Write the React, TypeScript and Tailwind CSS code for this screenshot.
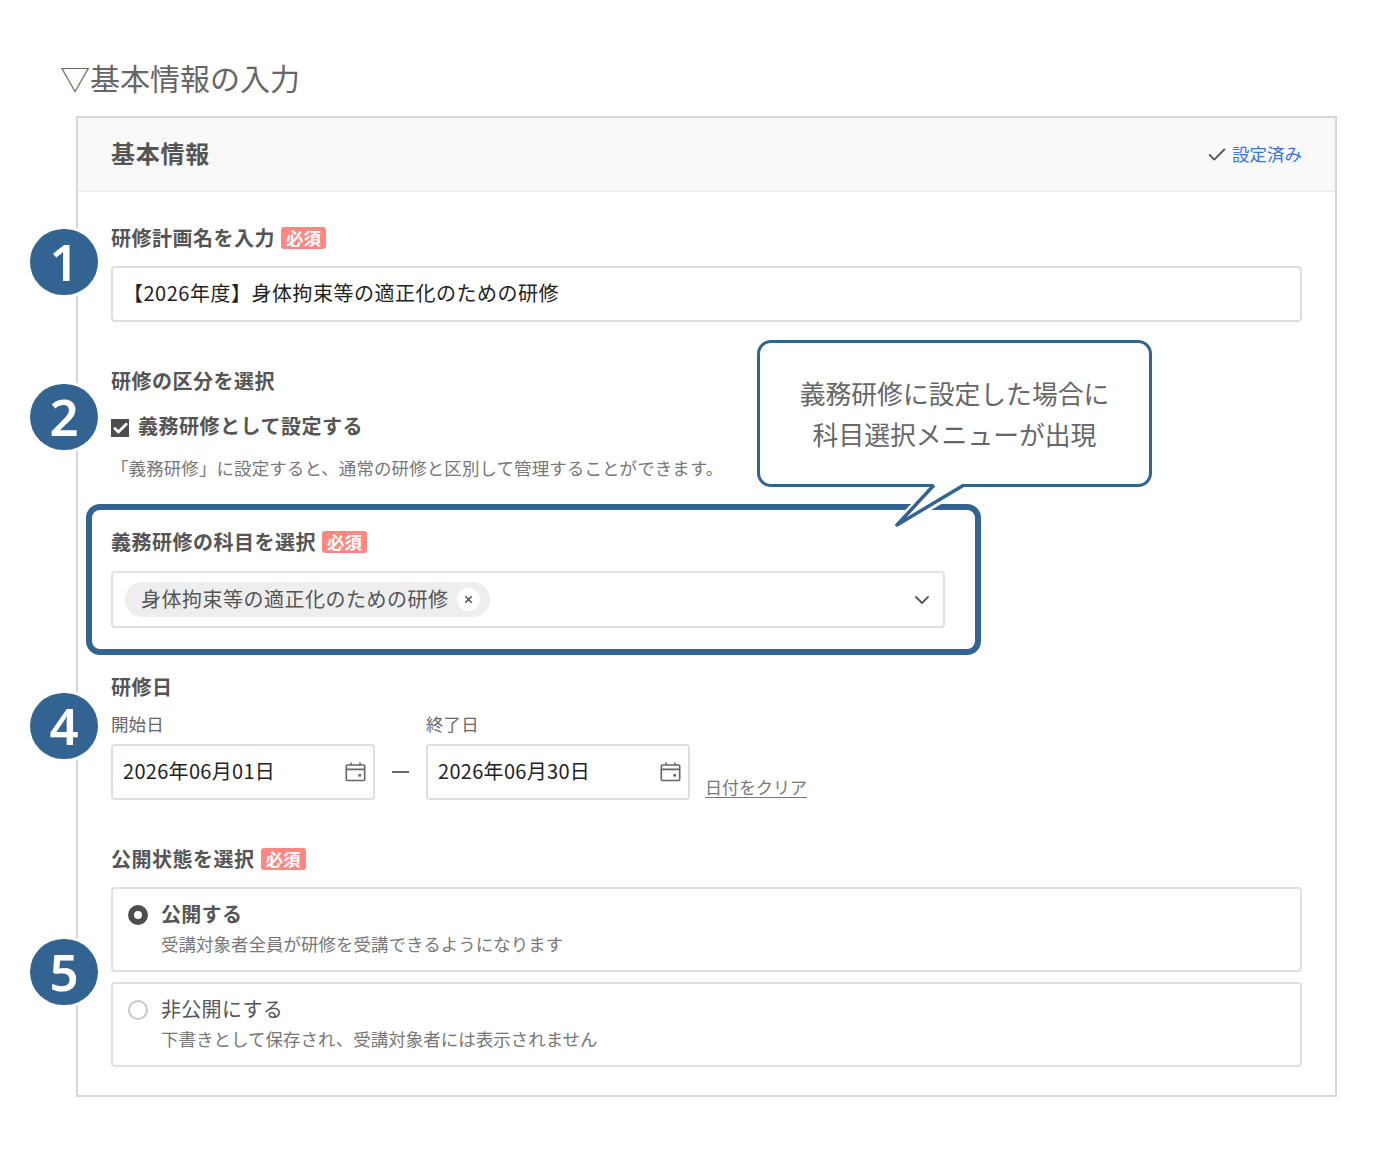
import { Check, ChevronDown, X } from "lucide-react";

const fieldLabel = "text-[20px] leading-[28px] font-bold tracking-[0.5px] text-[#555]";

const Required = () =>
<span className="ml-[6px] flex h-[22px] w-[45px] items-center justify-center rounded-[3px] bg-[#ff8781] pb-[1px] text-[17.5px] font-bold leading-none tracking-normal text-white">
    必須
  </span>;

const Step = ({ n, top }: {n: number;top: string;}) =>
<div className={`absolute left-[30px] z-10 flex h-[66px] w-[68px] items-center justify-center rounded-full bg-[#336491] pb-[2px] font-['Noto_Sans',sans-serif] text-[51px] font-semibold leading-none text-white shadow-[0_0_0_3px_#fff] ${top}`}>
    {n}
  </div>;

const CalendarIcon = () =>
<svg width="21" height="20" viewBox="0 0 21 20" fill="none" stroke="#666" strokeWidth="1.6" className="shrink-0">
    <rect x="1.3" y="3" width="18.4" height="15.5" rx="1" />
    <path d="M1.3 7.4h18.4M6 .5v2.5M15 .5v2.5" />
    <rect x="13.4" y="12" width="2.6" height="2.6" fill="#666" stroke="none" />
  </svg>;

const DateField = ({ label, value }: {label: string;value: string;}) =>
<div className="w-[264px]">
    <div className="-translate-y-px text-[17.5px] leading-[24px] tracking-[0.1px] text-[#666]">{label}</div>
    <div className="mt-[7px] flex h-[56px] items-center justify-between rounded-[4px] border-2 border-[#dedede] pl-[10px] pr-[7px] text-[20px] tracking-[0.3px] text-[#222]">
      <span className="-translate-y-px">{value}</span>
      <CalendarIcon />
    </div>
  </div>;

const RadioCard = ({ title, desc, selected, className }: {title: string;desc: string;selected?: boolean;className?: string;}) =>
<div className={`flex h-[85px] gap-[13px] rounded-[4px] border-2 border-[#e0e0e0] pl-[15px] pt-[11px] ${className ?? ""}`}>
    <div className={`mt-[5px] h-[20px] w-[20px] shrink-0 rounded-full bg-white ${selected ? "border-[6px] border-[#4d4d4d]" : "border-2 border-[#c8c8c8]"}`} />
    <div>
      <div className={`text-[20px] leading-[28px] tracking-[0.3px] text-[#555] ${selected ? "font-bold" : ""}`}>{title}</div>
      <div className="mt-[2px] text-[17.5px] leading-[28px] text-[#777]">{desc}</div>
    </div>
  </div>;

const App = () =>
<div className="relative h-[1152px] w-[1394px] overflow-hidden bg-white pl-[60px] pt-[57px] font-['Noto_Sans_CJK_JP',sans-serif]">
    <h1 className="text-[30px] font-normal leading-[40px] text-[#666]">▽基本情報の入力</h1>

    <div className="ml-[16px] mt-[19px] w-[1261px] border-2 border-[#d6d6d6]">
      <div className="flex h-[74px] items-center justify-between border-b border-[#ececec] bg-[#f9f9f9] px-[33px]">
        <h2 className="pb-[4px] text-[24px] font-bold tracking-[0.75px] text-[#555]">基本情報</h2>
        <div className="flex items-center gap-[4px] text-[17.5px] text-[#3d74d4]">
          <Check size={22} strokeWidth={2} className="text-[#555]" />
          <span>設定済み</span>
        </div>
      </div>

      <div className="px-[33px] pb-[28px] pt-[32px]">
        <div className={`flex items-center ${fieldLabel}`}>
          研修計画名を入力
          <Required />
        </div>
        <div className="mt-[14px] flex h-[56px] items-center rounded-[4px] border-2 border-[#dedede] pb-[2px] pl-[10px] text-[20px] tracking-[0.5px] text-[#222]">
          【2026年度】身体拘束等の適正化のための研修
        </div>

        <div className={`mt-[45px] ${fieldLabel}`}>研修の区分を選択</div>
        <div className="mt-[18px] flex items-start gap-[9px]">
          <div className="mt-[6px] flex h-[18px] w-[18px] items-center justify-center bg-[#4d4d4d]">
            <Check size={17} strokeWidth={4} className="text-white" />
          </div>
          <span className={`${fieldLabel} -translate-y-px tracking-[0.3px]`}>義務研修として設定する</span>
        </div>
        <div className="mt-[13px] text-[17.5px] leading-[28px] tracking-[0.08px] text-[#777]">「義務研修」に設定すると、通常の研修と区別して管理することができます。</div>

        <div className="-ml-[25px] mt-[22px] w-[895px] rounded-[14px] border-[6px] border-[#336491] pb-[21px] pl-[19px] pr-[30px] pt-[18px]">
          <div className={`flex items-center ${fieldLabel}`}>
            義務研修の科目を選択
            <Required />
          </div>
          <div className="mt-[15px] flex h-[57px] items-center justify-between rounded-[4px] border-2 border-[#e0e0e0] pl-[12px] pr-[9px]">
            <div className="flex h-[35px] w-[365px] items-center justify-between rounded-full bg-[#eeeeee] pl-[16px] pr-[10px] text-[20px] tracking-[0.5px] text-[#555]">
              <span className="-translate-y-px">身体拘束等の適正化のための研修</span>
              <span className="flex h-[23px] w-[23px] items-center justify-center rounded-full bg-white">
                <X size={11} strokeWidth={3.5} className="text-[#555]" />
              </span>
            </div>
            <ChevronDown size={24} strokeWidth={1.8} className="text-[#555]" />
          </div>
        </div>

        <div className={`mt-[18px] ${fieldLabel}`}>研修日</div>
        <div className="mt-[12px] flex items-end">
          <DateField label="開始日" value="2026年06月01日" />
          <div className="flex h-[56px] w-[51px] items-center justify-center">
            <div className="h-[2px] w-[17px] bg-[#666]" />
          </div>
          <DateField label="終了日" value="2026年06月30日" />
          <a className="mb-[1px] ml-[15px] text-[17px] leading-[24px] text-[#777] underline underline-offset-[3px]">日付をクリア</a>
        </div>

        <div className={`mt-[45px] flex items-center ${fieldLabel}`}>
          公開状態を選択
          <Required />
        </div>
        <RadioCard className="mt-[14px]" title="公開する" desc="受講対象者全員が研修を受講できるようになります" selected />
        <RadioCard className="mt-[10px]" title="非公開にする" desc="下書きとして保存され、受講対象者には表示されません" />
      </div>
    </div>

    <Step n={1} top="top-[229px]" />
    <Step n={2} top="top-[384px]" />
    <Step n={4} top="top-[693px]" />
    <Step n={5} top="top-[939px]" />

    {/* callout over the highlighted select */}
    <div className="absolute left-[757px] top-[340px] z-10 flex h-[147px] w-[395px] items-center justify-center rounded-[14px] border-[3px] border-[#336491] bg-white text-center text-[25.8px] leading-[41px] text-[#666]">
      <div className="-translate-y-px">
        義務研修に設定した場合に
        <br />
        科目選択メニューが出現
      </div>
    </div>
    <svg className="absolute left-[880px] top-[475px] z-20" width="100" height="60" viewBox="0 0 100 60" fill="none">
      <path d="M51 15 L17 50 L76 15" stroke="#fff" strokeWidth="9" strokeLinejoin="round" />
      <path d="M54 8.5 L17 50 L84 8.5 Z" fill="#fff" />
      <path d="M54 10 L17 50 L84 10" stroke="#336491" strokeWidth="3.5" strokeLinejoin="round" />
    </svg>
  </div>;

export default App;
